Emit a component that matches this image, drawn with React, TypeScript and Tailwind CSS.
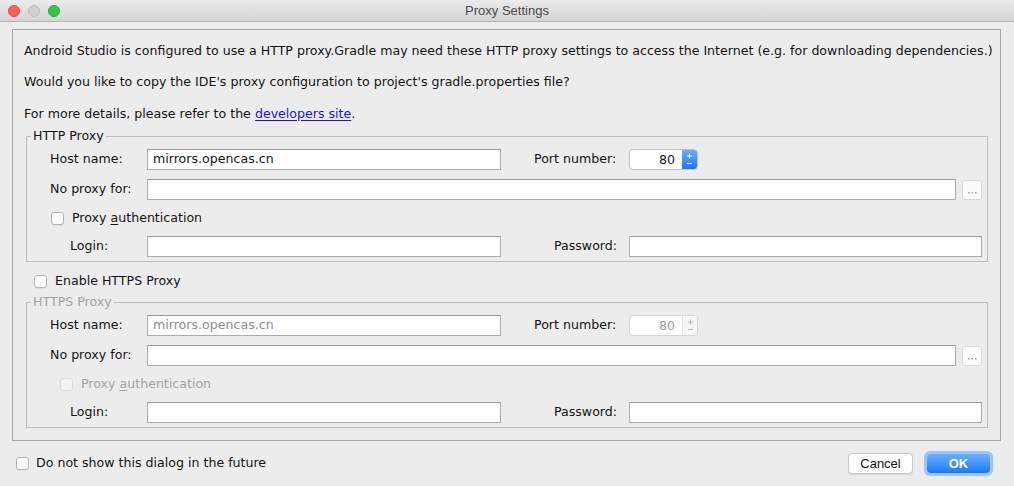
import React from "react";

const Checkbox = ({ disabled = false }: { disabled?: boolean }) => (
  <span
    className={`inline-block w-[13px] h-[13px] shrink-0 rounded-[3px] border ${
      disabled
        ? "border-[#dadada] bg-[#f3f3f3]"
        : "border-[#b2b2b2] bg-white shadow-[0_1px_1px_rgba(0,0,0,0.06)]"
    }`}
  />
);

const Field = ({
  value = "",
  disabled = false,
  className = "",
}: {
  value?: string;
  disabled?: boolean;
  className?: string;
}) => (
  <div
    className={`h-[21px] bg-white border border-[#ababab] border-t-[#9b9b9b] px-[5px] flex items-center ${
      disabled ? "text-[#8d8d8d]" : "text-[#141414]"
    } ${className}`}
  >
    {value}
  </div>
);

const Spinner = ({ disabled = false }: { disabled?: boolean }) => (
  <div
    className={`w-[69px] h-[21px] flex rounded-[4px] border bg-white overflow-hidden ${
      disabled ? "border-[#d4d4d4]" : "border-[#c2c2c2]"
    }`}
  >
    <div
      className={`flex-1 text-right pr-[7px] leading-[19px] ${
        disabled ? "text-[#9a9a9a]" : "text-[#141414]"
      }`}
    >
      80
    </div>
    <div
      className={`w-[15px] flex items-center justify-center ${
        disabled
          ? "bg-[#f6f6f6] border-l border-[#e2e2e2]"
          : "bg-gradient-to-b from-[#68aefb] to-[#1a78f2]"
      }`}
    >
      <svg width="7" height="15" viewBox="0 0 7 15">
        <g stroke={disabled ? "#b4b4b4" : "#ffffff"} strokeWidth="1">
          <path d="M3.5 1.5v5M1 4h5" />
          <path d="M1 11.5h5" />
        </g>
      </svg>
    </div>
  </div>
);

const Dots = () => (
  <div className="w-[20px] h-[20px] ml-[6px] rounded-[3px] border border-[#d6d6d6] bg-[#fbfbfb] flex items-end justify-center pb-[5px]">
    <svg width="9" height="2" viewBox="0 0 9 2">
      <g fill="#a2a2a2">
        <rect x="0" y="0" width="1.5" height="1.5" />
        <rect x="3.5" y="0" width="1.5" height="1.5" />
        <rect x="7" y="0" width="1.5" height="1.5" />
      </g>
    </svg>
  </div>
);

const ProxyGroup = ({ title, disabled = false }: { title: string; disabled?: boolean }) => (
  <fieldset className="border border-[#bcbcbc] ml-[13px] mr-[12px] pb-[4px]">
    <legend className={`ml-[4px] px-[2px] leading-[16px] ${disabled ? "text-[#a3a3a3]" : "text-[#141414]"}`}>
      {title}
    </legend>
    <div className="flex flex-col pt-[5px] pl-[23px] pr-[5px]">
      <div className="flex items-center h-[21px]">
        <span className="w-[97px]">Host name:</span>
        <Field value="mirrors.opencas.cn" disabled={disabled} className="w-[354px]" />
        <span className="w-[33px]" />
        <span className="w-[95px]">Port number:</span>
        <Spinner disabled={disabled} />
      </div>
      <div className="flex items-center h-[21px] mt-[9px]">
        <span className="w-[97px]">No proxy for:</span>
        <Field className="flex-1" />
        <Dots />
      </div>
      <div className={`flex items-center h-[21px] mt-[8px] ${disabled ? "pl-[10px] text-[#a3a3a3]" : "pl-[1px]"}`}>
        <Checkbox disabled={disabled} />
        <span className="ml-[8px]">
          Proxy <span className="underline underline-offset-2">a</span>uthentication
        </span>
      </div>
      <div className="flex items-center h-[21px] mt-[7px]">
        <span className="w-[97px] pl-[20px]">Login:</span>
        <Field className="w-[354px]" />
        <span className="w-[33px]" />
        <span className="w-[95px] pl-[20px]">Password:</span>
        <Field className="flex-1" />
      </div>
    </div>
  </fieldset>
);

export default function App() {
  return (
    <div className="w-[1014px] h-[486px] bg-[#ececec] flex flex-col overflow-hidden font-['DejaVu_Sans',sans-serif] text-[12.6px] text-[#141414]">
      <div className="h-[22px] shrink-0 relative flex items-center justify-center bg-gradient-to-b from-[#ebebeb] to-[#d4d4d4] border-b border-[#b3b3b3]">
        <div className="absolute left-[8px] top-[5px] flex gap-[8px]">
          <span className="w-[12px] h-[12px] rounded-full bg-[#fc605b] border border-[#de4a43]" />
          <span className="w-[12px] h-[12px] rounded-full bg-[#d0d0d0] border border-[#bdbdbd]" />
          <span className="w-[12px] h-[12px] rounded-full bg-[#34c84a] border border-[#25a934]" />
        </div>
        <span className="font-['Liberation_Sans',sans-serif] text-[13px] text-[#4a4a4a]">Proxy Settings</span>
      </div>

      <div className="mt-[7px] ml-[12px] w-[989px] h-[412px] border border-[#a6a6a6] flex flex-col">
        <p className="mt-[13px] ml-[11px] leading-[16px] whitespace-nowrap">
          Android Studio is configured to use a HTTP proxy.Gradle may need these HTTP proxy settings to access the Internet (e.g. for downloading dependencies.)
        </p>
        <p className="mt-[15px] ml-[11px] leading-[16px]">
          Would you like to copy the IDE's proxy configuration to project's gradle.properties file?
        </p>
        <p className="mt-[16px] ml-[11px] leading-[16px]">
          For more details, please refer to the{" "}
          <a className="text-[#1a12e8] underline underline-offset-2">developers site</a>.
        </p>

        <div className="mt-[6px]">
          <ProxyGroup title="HTTP Proxy" />
        </div>

        <div className="flex items-center h-[16px] mt-[11px] ml-[21px]">
          <Checkbox />
          <span className="ml-[8px]">Enable HTTPS Proxy</span>
        </div>

        <div className="mt-[5px]">
          <ProxyGroup title="HTTPS Proxy" disabled />
        </div>
      </div>

      <div className="flex items-center mt-[10px] ml-[16px] mr-[21px] h-[25px]">
        <Checkbox />
        <span className="ml-[7px]">Do not show this dialog in the future</span>
        <div className="ml-auto flex items-center gap-[11px] font-['Liberation_Sans',sans-serif] text-[13px]">
          <button className="w-[65px] h-[21px] rounded-[4px] bg-white border border-[#c6c6c6] shadow-[0_1px_0_rgba(0,0,0,0.08)] text-[#111]">
            Cancel
          </button>
          <button className="w-[69px] h-[25px] rounded-[6px] p-[3px] bg-[#9cc6f5]">
            <span className="flex items-center justify-center w-full h-full rounded-[4px] bg-gradient-to-b from-[#69b1fb] to-[#1778f6] text-white font-bold">
              OK
            </span>
          </button>
        </div>
      </div>
    </div>
  );
}
